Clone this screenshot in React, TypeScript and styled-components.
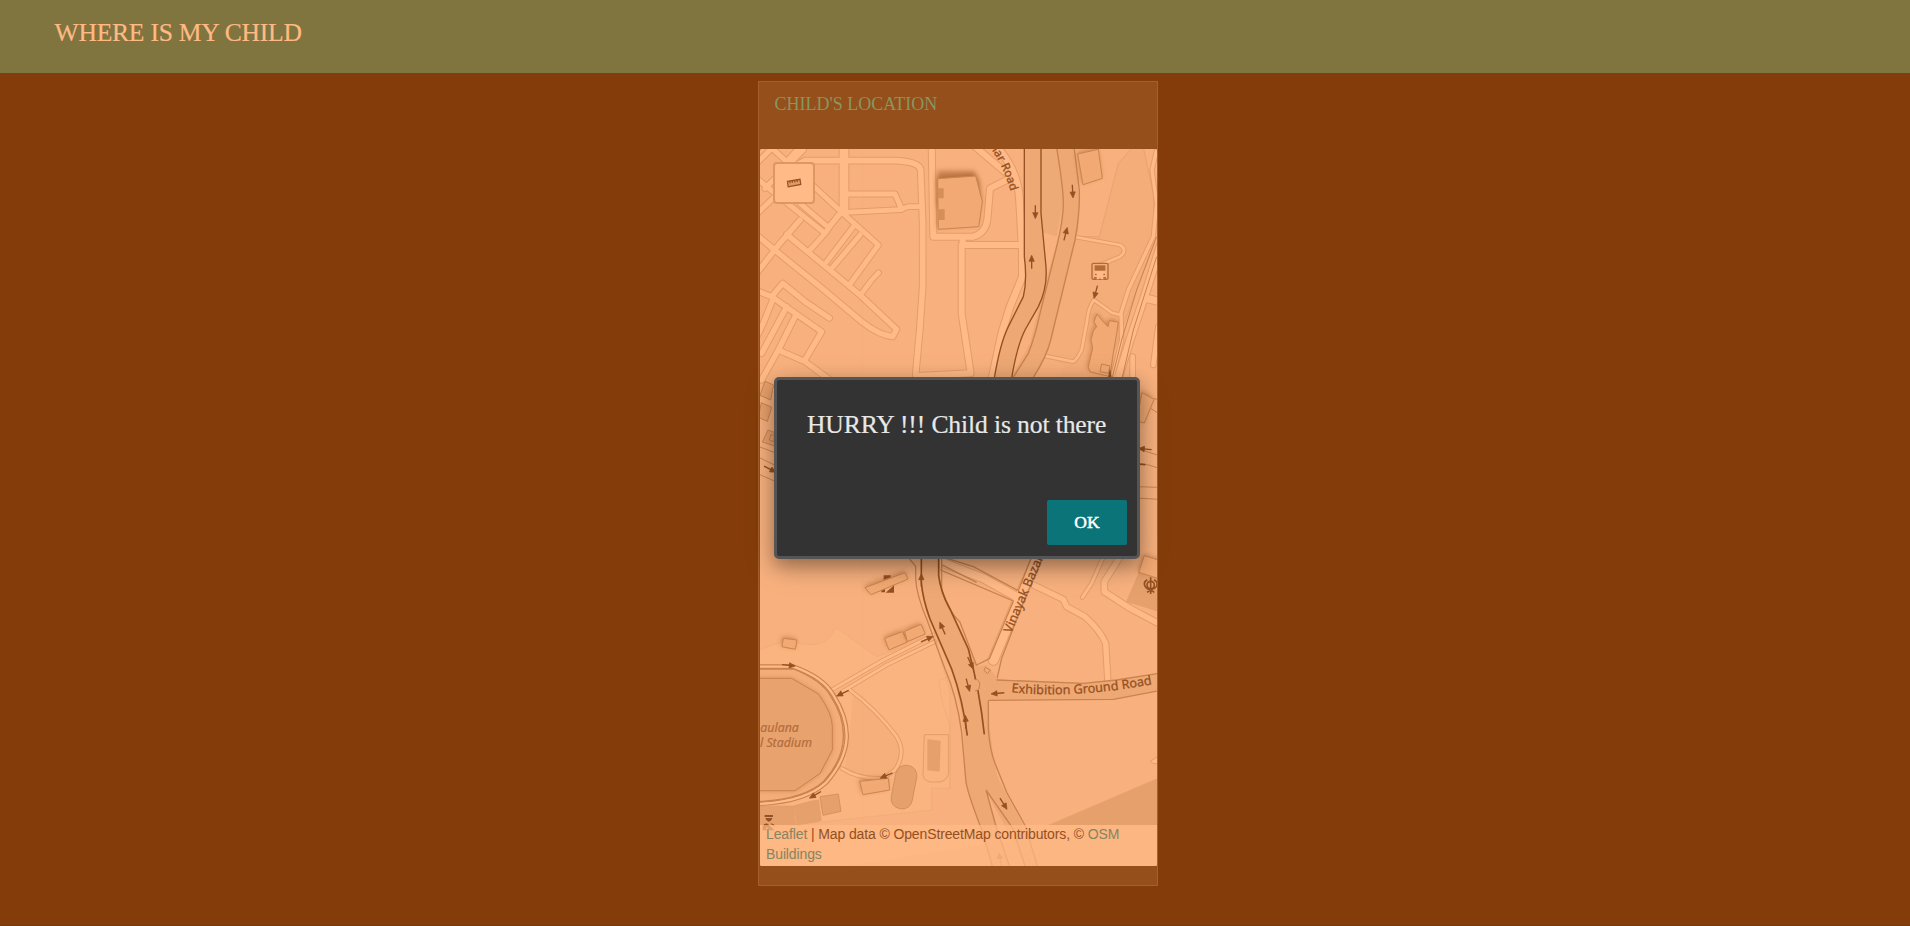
import React from "react";
import styled, { createGlobalStyle } from "styled-components";

const GlobalStyle = createGlobalStyle`
  * { box-sizing: border-box; }
  body {
    margin: 0;
    background: #843d0a;
    font-family: "Liberation Serif", "Times New Roman", serif;
  }
`;

const Page = styled.div`
  height: 926px;
  overflow: hidden;
  border-bottom: 1px solid #7b3808;
`;

const Header = styled.header`
  height: 73px;
  padding: 18px 54.5px 0;
  background: #80743f;
`;

const Title = styled.h1`
  margin: 0;
  color: #ffba84;
  font-size: 25.6px;
  font-weight: 400;
  line-height: 30px;
  letter-spacing: -0.25px;
  -webkit-text-stroke: 0.2px #ffba84;
`;

const Panel = styled.section`
  width: 400px;
  height: 805px;
  margin: 8px 0 0 758px;
  padding-left: 1px;
  background: #954f1b;
  border: 1px solid #a65f2c;
`;

const PanelHeading = styled.div`
  height: 67px;
  padding: 10px 0 0 14.5px;
  color: #88965f;
  font-size: 18px;
  line-height: 24px;
`;

const MapFrame = styled.div`
  position: relative;
  height: 717px;
  border-radius: 2px;
  overflow: hidden;
  background: #f8b17e;

  svg { display: block; }
`;

const MeasureButton = styled.button`
  position: absolute;
  top: 13px;
  left: 13px;
  width: 42px;
  height: 42px;
  padding: 0;
  display: grid;
  place-items: center;
  background: #ffba87;
  border: 2px solid #dd9762;
  border-radius: 4px;
`;

const Attribution = styled.div`
  position: absolute;
  left: 0;
  right: 0;
  bottom: 0;
  height: 41px;
  padding: 0 6px;
  background: rgba(255, 186, 135, 0.7);
  color: #954f1f;
  font: 14px/20px "Liberation Sans", Arial, sans-serif;
  letter-spacing: -0.12px;

  span { position: relative; top: -1px; }
`;

const Credit = styled.a`
  color: #878461;
`;

const Dialog = styled.div`
  position: absolute;
  top: 377px;
  left: 774px;
  width: 366px;
  height: 182px;
  padding: 26px 10px 11px 30px;
  display: flex;
  flex-direction: column;
  justify-content: space-between;
  background: #333;
  border: 3px solid #555;
  border-radius: 5px;
  box-shadow: 0 8px 32px rgba(0, 0, 0, 0.17), 0 7px 18px rgba(0, 0, 0, 0.3);
`;

const Message = styled.p`
  margin: 0;
  padding-top: 4px;
  color: #e8e8e8;
  font-size: 25.6px;
  line-height: 30px;
  letter-spacing: -0.12px;
  -webkit-text-stroke: 0.2px #e8e8e8;
  white-space: nowrap;
`;

const OkButton = styled.button`
  align-self: flex-end;
  width: 80px;
  height: 45px;
  padding: 0 0 2px;
  background: #0a7479;
  border: 0;
  border-radius: 2px;
  color: #fff;
  font: 400 17.5px/20px "Liberation Serif", serif;
  -webkit-text-stroke: 0.5px #fff;
`;

const C = {
  fill: "#ffba87",
  edge: "#e39d69",
  main: "#eda874",
  dark: "#955023",
  mid: "#c9834f",
  build: "#f2a973",
  wall: "#cb854f",
  shade: "#e5a06c",
};

type Origin = [number, number];
const NW: Origin = [-30, -27];
const NE: Origin = [570, -27];
const SW: Origin = [-30, 1173];
const SE: Origin = [570, 1173];
const BL: Origin = [-30, 1653];
const BR: Origin = [570, 1653];
const WEST: Origin = [-60, 663];
const EAST: Origin = [1050, 573];

const at = (o: Origin) => `translate(${o[0]} ${o[1]})`;

const streets: [Origin, number, string][] = [
  [NW, 26, "M282 0V205"],
  [NW, 17, "M130 80L165 62H430Q508 64 512 90L518 250V440L510 560L497 703"],
  [NW, 15, "M282 162H435L455 208"],
  [NW, 14, "M272 218L450 209L475 200H518"],
  [NW, 15, "M190 138L270 212L385 315L298 435"],
  [NW, 15, "M150 190L235 262L285 205"],
  [NW, 15, "M20 115L85 168L225 280L265 225M20 222L95 150M20 70L70 20M50 10L110 65L150 20M45 145L160 30"],
  [NW, 15, "M225 280L180 330M310 260L230 365M330 285L248 382"],
  [NW, 16, "M150 240L80 322L20 400M20 285L80 335L210 440L335 545Q385 585 428 590L440 568L330 465L110 283"],
  [NW, 14, "M335 460L365 420L386 398"],
  [NW, 16, "M20 452L65 470L98 430L165 485L238 534M65 470L150 530L215 575L165 660M70 475L40 550L20 590M110 500L35 640M135 530L85 630L35 720M85 630L165 665L240 720"],
  [NE, 18, "M-55 10L-50 290H70Q105 280 112 240L120 145L170 120M38 295V315H210M35 315V520L62 700L-100 708M75 20L170 100"],
  [NE, 20, "M130 10Q200 80 208 170L217 330V410L180 500L155 580L125 720"],
  [NE, 8, "M375 291L510 315Q535 330 510 350L450 375M432 480L485 518L515 526M432 480Q415 500 410 550L395 630Q380 660 370 665L285 648"],
  [NE, 10, "M620 30L606 90L620 190L610 290L535 450L513 520L515 600L485 720"],
  [NE, 22, "M640 290L590 450L540 600L503 720M590 475L640 488"],
  [NE, 14, "M625 560L610 675M548 650V720"],
  [SW, 8, "M245 450L400 360L550 285M260 465L410 375L555 305"],
  [SW, 8, "M300 450Q380 510 440 590Q470 640 435 690L400 714Q330 720 275 685"],
  [SE, 24, "M-70 50L100 115L190 165"],
  [SE, 29, "M264 50L200 190L130 360"],
  [SE, 16, "M250 135L340 178L350 200L405 230Q450 270 467 310L474 430"],
  [SE, 17, "M510 50L463 125V155L540 205L625 250"],
  [SE, 9, "M460 50L425 130L397 172"],
];

const arrows: [Origin, number, number, number][] = [
  [NE, 256, 217, 180], [NE, 245, 365, 0], [NE, 368, 155, 177], [NE, 347, 281, 14], [NE, 437, 457, 195],
  [SW, 514, 120, 0], [SW, 577, 264, -24], [SW, 532, 297, 65], [SW, 117, 376, 96], [SW, 277, 460, 245],
  [SE, 62, 370, 155], [SE, 54, 436, 165], [SE, 142, 460, 265], [SE, 47, 545, -3],
  [BL, 195, 285, 240], [BL, 408, 227, 247], [BR, 161, 312, 148], [WEST, 91, 298, 117], [EAST, 104, 327, 275],
];

const BuildingBox = ({ d, o, fill = C.build }: { d: string; o: Origin; fill?: string }) => (
  <g transform={at(o)}>
    <path d={d} fill="#a05a28" opacity=".5" filter="url(#soft)" transform="translate(-3 -5)" />
    <path d={d} fill={fill} stroke={C.wall} strokeWidth="3" />
  </g>
);

const StreetMap = () => (
  <svg width="397" height="717" viewBox="0 0 1191 2151">
    <defs>
      <filter id="soft" x="-50%" y="-50%" width="200%" height="200%">
        <feGaussianBlur stdDeviation="8" />
      </filter>
    </defs>
    <rect width="1191" height="2151" fill="#f8b17e" />
    <g transform={at(NE)} fill="#f4ad79">
      <path d="M505 70L550 20H580L612 170V310L500 610L450 720H205L380 290H448Z" stroke={C.edge} strokeWidth="2" />
      <path d="M270 0H316L340 180L320 290L275 275Z" fill="#eeaa76" />
      <path d="M280 278L320 292L285 430Z" fill="#f9b27f" />
      <path d="M280 650L345 675L325 720H240Z" fill="#f7af7b" />
    </g>
    <g transform={at(SW)} fill="#fab47f" stroke="#edaa76" strokeWidth="2">
      <path d="M20 332L110 300L160 312Q225 320 240 290L258 262L380 350L550 290L600 450V745H545V810L0 870V370Z" />
      <path d="M310 450Q440 560 450 620Q450 690 400 714Q330 720 285 685L300 570Z" fill="#f6af7b" stroke="none" />
      <path d="M600 410L567 420L575 480L600 560V745" fill="none" />
    </g>
    <path transform={at(BR)} d="M-20 452L300 405L622 360V498H-300Z" fill="#f3ab77" />
    <path transform={at(BR)} d="M622 235V375H295Z" fill={C.shade} />

    {streets.map(([o, w, d], i) => (
      <path key={`c${i}`} transform={at(o)} d={d} fill="none" stroke={C.edge} strokeWidth={w + 6} strokeLinejoin="round" strokeLinecap="round" />
    ))}
    {streets.map(([o, w, d], i) => (
      <path key={`f${i}`} transform={at(o)} d={d} fill="none" stroke={C.fill} strokeWidth={w} strokeLinejoin="round" strokeLinecap="round" />
    ))}

    <g transform={at(NE)} strokeWidth="3" fill="none">
      <path d="M316 0L340 180L328 285L285 430L240 610L180 720H250L302 610L385 270L388 170L370 0Z" fill={C.main} stroke="none" />
      <path d="M316 0Q340 140 340 190Q340 240 320 320L270 520Q255 590 235 640L190 712M372 20L388 150Q390 220 375 300L302 600Q290 650 250 712" stroke={C.mid} strokeWidth="4" />
      <path d="M223 0V350Q232 420 220 470L175 560Q150 610 132 720H184Q200 620 225 570L265 500Q295 440 287 370L273 220V0Z" fill={C.main} stroke="none" />
      <path d="M223 0V350Q232 420 220 470L175 560Q150 610 132 720M273 0V220L287 370Q295 440 265 500L225 570Q200 620 184 720" stroke={C.dark} strokeWidth="4" />
      <path d="M620 290L560 450L515 600L485 720M620 350L550 570L515 720" stroke={C.mid} />
    </g>

    <g transform={at(SE)} fill="none" stroke={C.mid} strokeWidth="4">
      <path d="M-90 30L70 80L205 152L245 50M-75 70L190 183L118 356L80 375M278 50L205 225L155 355L140 420" />
      <path d="M60 385L110 375L145 418L400 429L500 420L640 398V450L490 478L380 479L115 481L100 590Z" fill={C.main} stroke="none" />
      <path d="M140 420L400 430L500 420L640 398M115 481L380 479L490 478L640 450" />
    </g>

    <path d="M484 1200V1290Q486 1350 520 1430L590 1600L617 1750L617 1890L680 1890L675 1620L620 1500L545 1320L536 1200Z" fill="#f5af7b" />
    <path d="M484 1220V1280Q484 1360 520 1440L575 1570Q610 1670 612 1790L617 1890Q620 1940 665 2035L694 2151H746L680 1930L740 2040L795 2151H832L785 2020L715 1890Q690 1800 686 1660L650 1550L590 1420Q540 1320 536 1270V1220Z" fill={C.main} />
    <g fill="none" stroke={C.mid} strokeWidth="4">
      <path d="M440 1220L467 1252V1290Q470 1340 500 1410L555 1560Q590 1640 605 1750L617 1890Q618 1920 665 2042L697 2151M545 1220V1320Q560 1380 600 1420L650 1550M685 1655V1740Q690 1810 708 1850L740 1930L796 2031L832 2151M678 1923L706 2025L748 2151M678 1923L758 2037L795 2151M543 1246L650 1300" />
      <path d="M484 1220V1300Q488 1350 510 1410L575 1560Q608 1650 622 1760M536 1220V1280Q542 1330 570 1380L625 1500Q660 1630 673 1756" stroke={C.dark} strokeWidth="5" />
    </g>
    <path d="M642 1591Q667 1590 656 1622L645 1626" fill={C.main} stroke={C.mid} strokeWidth="3" />
    <path d="M676 1555L691 1563L683 1574L672 1565Z" fill={C.build} stroke={C.wall} strokeWidth="3" />

    <g transform={at(SW)} fill="none">
      <path d="M20 380H130Q220 412 250 465Q291 530 290 590Q288 660 228 728Q165 787 20 792" stroke={C.mid} strokeWidth="14" />
      <path d="M20 380H130Q220 412 250 465Q291 530 290 590Q288 660 228 728Q165 787 20 792" stroke={C.fill} strokeWidth="7" />
      <path d="M20 387H130Q215 420 243 470Q282 530 280 590Q279 660 222 723Q160 780 20 785Z" fill="#f4ad79" stroke={C.mid} strokeWidth="4" />
      <path d="M20 415H125L205 462Q247 520 247 560V630L210 700L135 752H20Z" fill="#a05a28" opacity=".4" filter="url(#soft)" />
      <path d="M20 415H125L205 462Q247 520 247 560V630L210 700L135 752H20Z" fill="#e8a26d" stroke={C.mid} strokeWidth="3" />
    </g>

    <path transform={at(NE)} d="M-38 92H72L90 125V185L80 200H-38Z" fill="#a05a28" opacity=".55" filter="url(#soft)" />
    <BuildingBox o={NE} d="M-37 116L77 108L97 185L86 260L-35 268Z" />
    <g transform={at(NW)} fill="#d58e58"><path d="M563 145H581V175H563ZM565 208H584V240H565Z" /></g>
    <BuildingBox o={NE} d="M383 42L445 28L457 115L399 134Z" />
    <BuildingBox o={NE} d="M441 522L457 542L474 560L478 542L505 546L500 580L488 650L480 710L419 695L415 680L428 625L423 600L430 573L440 560L432 545Z" />
    <path transform={at(NE)} d="M455 672L480 678L475 700L450 695Z" fill={C.build} stroke={C.mid} strokeWidth="3" />
    <path transform={at(NE)} d="M480 685L485 712H474Z" fill={C.dark} />
    <BuildingBox o={SW} d="M404 295L458 275L472 306L417 330Z" />
    <BuildingBox o={SW} d="M464 274L513 253L526 282L472 305Z" />
    <BuildingBox o={SW} d="M100 295L141 300L136 328L96 320Z" />
    <BuildingBox o={BL} d="M329 244L415 235L419 270L339 284Z" />

    <g transform={at(WEST)} fill="#eaa26d" stroke={C.wall} strokeWidth="3">
      <path d="M75 34L101 45L92 90L60 76ZM64 98L95 112L82 154L55 142ZM84 180L110 190V230L67 216ZM93 193L105 198L101 215L88 210Z" />
      <path d="M60 231L110 250M60 264L110 288M60 314L110 336" fill="none" />
    </g>
    <BuildingBox o={EAST} d="M96 158L132 178L103 249L80 242Z" />
    <g transform={at(EAST)} fill="none" stroke={C.wall} strokeWidth="3">
      <path d="M132 175L145 180M122 205L145 220M80 325L145 346M80 370Q115 372 145 384M80 440L145 442M80 474L145 478" />
      <path d="M80 372L106 374" stroke={C.dark} strokeWidth="5" />
    </g>

    <g fill={C.shade}>
      <path transform={at(SE)} d="M566 98L640 120V220L528 185Z" />
      <path transform={at(BL)} d="M532 118L572 122L569 215L532 211Z" />
      <path transform={at(BL)} d="M30 318H130L142 375L214 362L206 300L180 304L130 318L140 345H30Z" stroke={C.edge} strokeWidth="2" />
      <path transform={at(BL)} d="M30 345H133L140 375H30Z" />
      <path transform={at(BL)} d="M210 290L265 282L273 334L219 346Z" stroke={C.wall} strokeWidth="2" />
      <rect x="400" y="1848" width="64" height="132" rx="30" transform="rotate(11 431 1914)" stroke={C.wall} strokeWidth="2" />
      <path transform={at(BL)} d="M523 104H596V220Q590 245 565 246H540Q520 240 519 225Z" fill="none" stroke={C.edge} strokeWidth="3" />
      <path transform={at(BR)} d="M640 160L602 183Q605 194 625 190" fill={C.fill} stroke={C.edge} strokeWidth="3" />
    </g>
    <BuildingBox o={SE} d="M583 47L640 65V120L566 97Z" />

    {arrows.map(([o, x, y, a], i) => (
      <g key={i} transform={`translate(${o[0] + x} ${o[1] + y}) rotate(${a})`} fill={C.dark} stroke={C.dark}>
        <path d="M0 21V-5" strokeWidth="4" />
        <path d="M0 -19L8 -1H-8Z" strokeWidth="2" />
      </g>
    ))}
    <path d="M725 2151L719 2128M711 2129L717 2113L728 2127Z" stroke={C.mid} fill={C.mid} strokeWidth="3" />

    <g transform={at(NE)}>
      <rect x="426" y="370" width="48" height="48" rx="4" fill="#f5ad79" stroke="#b16b38" strokeWidth="4" />
      <path d="M434 376H466V392H434Z" fill="#b16b38" />
      <path d="M433 394H467V413H461V418H453V412H447V418H439V413H433Z" fill={C.fill} />
      <path d="M435 401H440V406H435ZM460 401H465V406H460ZM432 411H440V416H432ZM460 411H468V416H460Z" fill="#b16b38" />
    </g>
    <BuildingBox o={SW} d="M345 143L465 98L474 117L363 164Z" />
    <path transform={at(SW)} d="M432 136V158H407ZM394 152L405 148V157H394ZM401 106H422V112L401 119Z" fill={C.dark} />
    <g transform={at(BL)} fill={C.dark}>
      <path d="M44 345H69V351H44ZM46 354H67Q64 364 56 365Q48 363 46 354ZM38 378Q43 369 53 371L73 391H60L49 380V391H38ZM61 371Q71 369 75 380Z" />
    </g>
    <g transform={at(SE)} fill="none" stroke={C.dark} strokeWidth="5">
      <circle cx="602" cy="135" r="11" />
      <path d="M602 112V162M592 119C577 127 582 145 602 150C623 145 628 127 612 119M591 157L613 143M613 157L591 143" />
    </g>

    <g fontFamily="Noto Sans, sans-serif" fill={C.dark} stroke={C.dark} strokeWidth="0.8">
      <path id="bazar" d="M754 1454L859 1204" fill="none" stroke="none" />
      <path id="exhibition" d="M754 1630Q950 1650 1185 1604" fill="none" stroke="none" />
      <path id="northroad" d="M678 -20Q732 45 758 150" fill="none" stroke="none" />
      <text fontSize="38"><textPath href="#bazar">Vinayak Bazar</textPath></text>
      <text fontSize="38"><textPath href="#exhibition">Exhibition Ground Road</textPath></text>
      <text fontSize="35"><textPath href="#northroad">shar Road</textPath></text>
      <g fontStyle="italic" fontSize="37" fill="#b36d3c" stroke="#b36d3c" strokeWidth=".6">
        <text x="1" y="1748">aulana</text>
        <text x="0" y="1793">l Stadium</text>
      </g>
    </g>
    <path d="M307 0V2151" stroke="#e9a26e" strokeWidth="1" opacity=".55" />
  </svg>
);

const RulerIcon = () => (
  <svg width="16" height="12" viewBox="0 0 16 12" fill="none" stroke="#955023" strokeWidth="1.2">
    <path d="M1.4 4.3L14 2.3L14.8 7.4L2.2 9.8Z" fill="#e09a66" />
    <path d="M4 4V6.2M6.4 3.6V5.8M8.8 3.2V5.4M11.2 2.8V5" />
  </svg>
);

export default function App() {
  return (
    <Page>
      <GlobalStyle />
      <Header>
        <Title>WHERE IS MY CHILD</Title>
      </Header>
      <Panel>
        <PanelHeading>CHILD'S LOCATION</PanelHeading>
        <MapFrame>
          <StreetMap />
          <MeasureButton aria-label="Measure">
            <RulerIcon />
          </MeasureButton>
          <Attribution>
            <span>
              <Credit>Leaflet</Credit> | Map data © OpenStreetMap contributors, © <Credit>OSM Buildings</Credit>
            </span>
          </Attribution>
        </MapFrame>
      </Panel>
      <Dialog role="alertdialog">
        <Message>HURRY !!! Child is not there</Message>
        <OkButton>OK</OkButton>
      </Dialog>
    </Page>
  );
}
